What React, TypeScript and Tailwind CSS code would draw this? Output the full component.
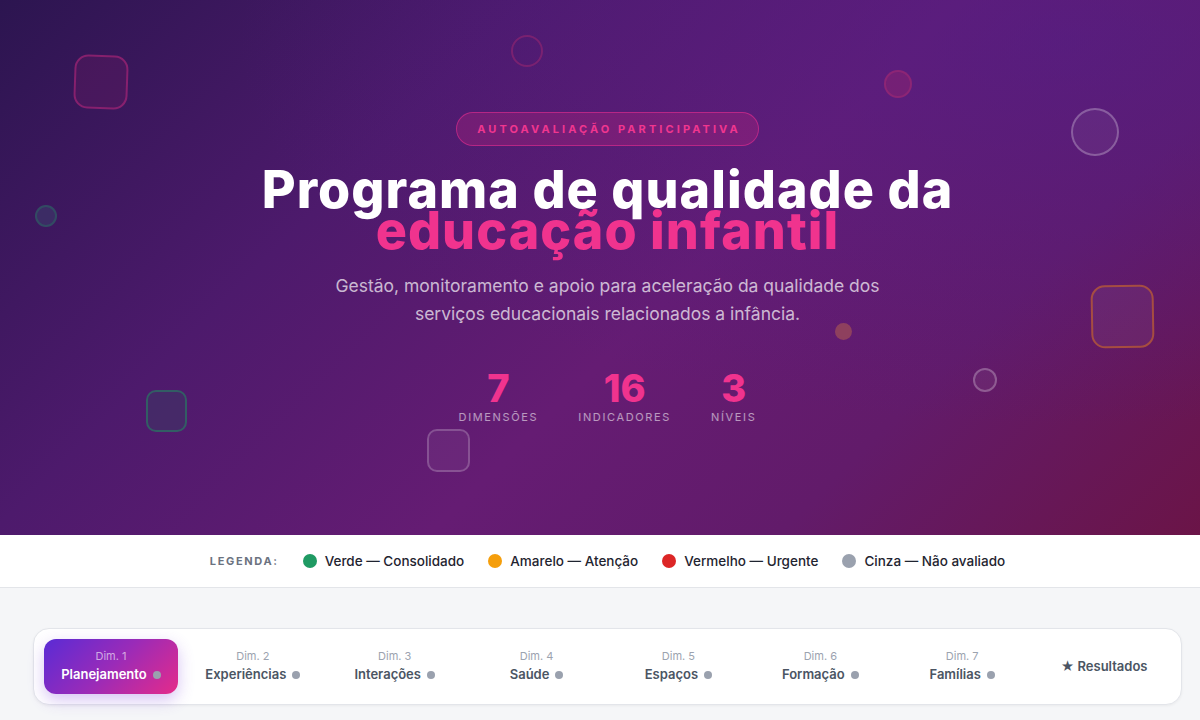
import React from 'react';

const dims = [
  { n: 1, label: 'Planejamento' },
  { n: 2, label: 'Experiências' },
  { n: 3, label: 'Interações' },
  { n: 4, label: 'Saúde' },
  { n: 5, label: 'Espaços' },
  { n: 6, label: 'Formação' },
  { n: 7, label: 'Famílias' },
];

const legend = [
  { color: 'bg-[#1f9a63]', text: 'Verde — Consolidado' },
  { color: 'bg-[#f59e0b]', text: 'Amarelo — Atenção' },
  { color: 'bg-[#dc2626]', text: 'Vermelho — Urgente' },
  { color: 'bg-[#9aa1ae]', text: 'Cinza — Não avaliado' },
];

const stats = [
  { value: '7', label: 'Dimensões' },
  { value: '16', label: 'Indicadores' },
  { value: '3', label: 'Níveis' },
];

export default function App() {
  return (
    <div className="w-full h-screen overflow-hidden bg-[#f5f6f8]">
      <div className="w-[1215px] font-['Inter',sans-serif]">
        {/* Hero */}
        <section className="relative h-[535px] overflow-hidden bg-[linear-gradient(135deg,#2c1550_0%,#4d1a6c_30%,#651c73_55%,#621b6a_75%,#6b1446_100%)]">
          <div className="absolute inset-0 bg-[radial-gradient(ellipse_at_88%_8%,rgba(80,30,135,0.6),transparent_55%)]" />

          {/* floating shapes */}
          <div className="absolute left-[74px] top-[55px] w-[54px] h-[54px] rounded-[14px] border-2 border-[#b0267a]/60 bg-[#8a1f6a]/20 rotate-[2deg]" />
          <div className="absolute left-[511px] top-[35px] w-[32px] h-[32px] rounded-full border-2 border-[#a3286f]/50" />
          <div className="absolute left-[884px] top-[70px] w-[28px] h-[28px] rounded-full border-2 border-[#a52a74]/50 bg-[#8e2470]/50" />
          <div className="absolute left-[1071px] top-[108px] w-[48px] h-[48px] rounded-full border-2 border-white/25 bg-white/5" />
          <div className="absolute left-[35px] top-[205px] w-[22px] h-[22px] rounded-full border-2 border-[#2f5a63]/70 bg-[#3c3a6a]/60" />
          <div className="absolute left-[1091px] top-[285px] w-[63px] h-[63px] rounded-[14px] border-2 border-[#c0602f]/70 bg-white/5 -rotate-[1deg]" />
          <div className="absolute left-[835px] top-[323px] w-[17px] h-[17px] rounded-full bg-[#9a4a5a]/80" />
          <div className="absolute left-[973px] top-[368px] w-[24px] h-[24px] rounded-full border-2 border-white/25 bg-white/5" />
          <div className="absolute left-[146px] top-[390px] w-[41px] h-[42px] rounded-[10px] border-2 border-[#2e6a64]/80 bg-[#3f3466]/60" />
          <div className="absolute left-[427px] top-[429px] w-[43px] h-[43px] rounded-[10px] border-2 border-white/20 bg-white/5" />

          <div className="relative flex flex-col items-center pt-[112px] text-center">
            <div className="h-[34px] px-[17px] flex items-center rounded-full border border-[#e22d8f]/60 bg-[#c2267f]/30">
              <span className="text-[11px] font-bold tracking-[0.28em] text-[#f0368f] pl-[0.28em]">AUTOAVALIAÇÃO PARTICIPATIVA</span>
            </div>

            <h1 className="mt-[23px] text-[52px] font-extrabold leading-[41px] tracking-[0.02em] text-white">
              <span className="block">Programa de qualidade da</span>
              <span className="block text-[#f0338e]">educação infantil</span>
            </h1>

            <p className="mt-[21px] max-w-[560px] text-[17.5px] leading-[28px] text-white/70">
              Gestão, monitoramento e apoio para aceleração da qualidade dos serviços educacionais relacionados a infância.
            </p>

            <div className="mt-[40px] flex items-start gap-[40px]">
              {stats.map((s) => (
                <div key={s.label} className="flex flex-col items-center">
                  <span className="text-[38px] font-extrabold leading-[40px] text-[#f0338e]">{s.value}</span>
                  <span className="mt-[1px] text-[11px] uppercase tracking-[0.15em] text-white/55">{s.label}</span>
                </div>
              ))}
            </div>
          </div>
        </section>

        {/* Legend */}
        <div className="h-[53px] bg-white border-b border-[#e3e5e9] flex items-center justify-center gap-[24px]">
          <span className="text-[11px] font-bold tracking-[0.15em] text-[#6b7280]">LEGENDA:</span>
          {legend.map((l) => (
            <div key={l.text} className="flex items-center gap-[8px]">
              <span className={`w-[14px] h-[14px] rounded-full ${l.color}`} />
              <span className="text-[13.5px] font-medium text-[#1f2430]">{l.text}</span>
            </div>
          ))}
        </div>

        {/* Dimension nav */}
        <div className="px-[33px] pt-[40px] pb-[14px]">
          <div className="rounded-[16px] border border-[#e3e5ea] bg-white p-[10px] shadow-[0_1px_3px_rgba(0,0,0,0.05)]">
            <div className="grid grid-cols-8 gap-[8px]">
              {dims.map((d) =>
                d.n === 1 ? (
                  <button
                    key={d.n}
                    className="h-[55px] rounded-[12px] bg-[linear-gradient(135deg,#5a2bd5_0%,#9a2bb8_50%,#e52b8a_100%)] shadow-[0_6px_16px_rgba(120,60,220,0.3)] flex flex-col items-center justify-center"
                  >
                    <span className="text-[11px] leading-[14px] text-white/60">Dim. {d.n}</span>
                    <span className="mt-[2px] flex items-center gap-[6px] text-[13px] font-semibold text-white">
                      {d.label}
                      <span className="w-[8px] h-[8px] rounded-full bg-[#9aa1ae]" />
                    </span>
                  </button>
                ) : (
                  <button key={d.n} className="h-[55px] rounded-[12px] flex flex-col items-center justify-center">
                    <span className="text-[11px] leading-[14px] text-[#9ca3af]">Dim. {d.n}</span>
                    <span className="mt-[2px] flex items-center gap-[6px] text-[13px] font-semibold text-[#4b5563]">
                      {d.label}
                      <span className="w-[8px] h-[8px] rounded-full bg-[#9aa1ae]" />
                    </span>
                  </button>
                )
              )}
              <button className="h-[55px] rounded-[12px] flex items-center justify-center text-[13px] font-semibold text-[#4b5563]">
                ★ Resultados
              </button>
            </div>
          </div>
        </div>
      </div>
    </div>
  );
}
